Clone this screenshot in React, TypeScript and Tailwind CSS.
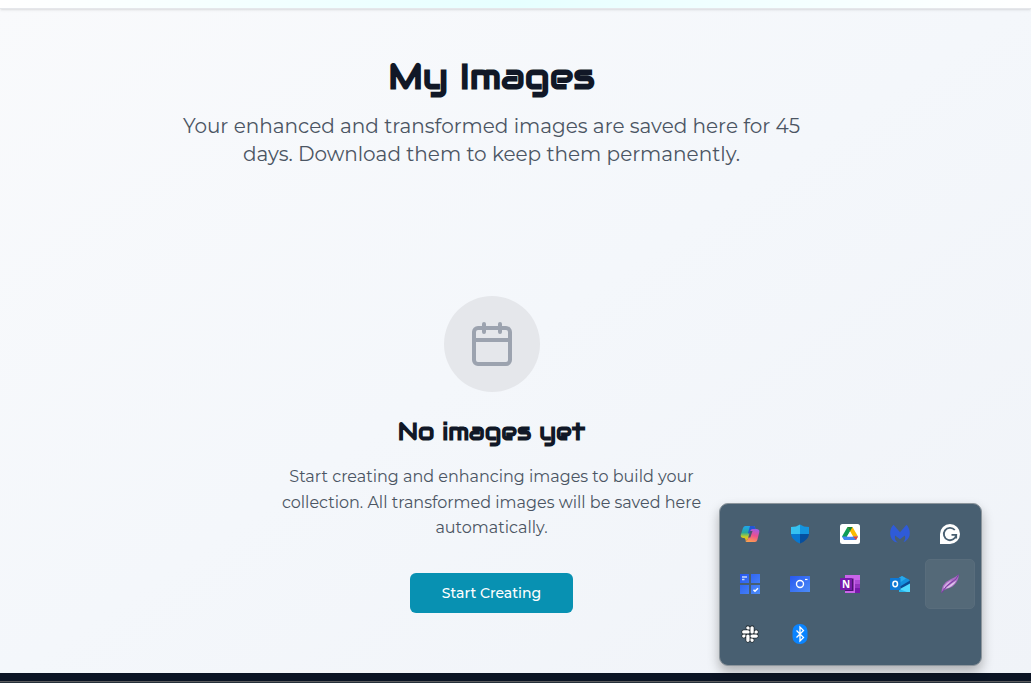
import React from "react";
import { FaSlack } from "react-icons/fa";

function Copilot() {
  return (
    <svg width="20" height="20" viewBox="0 0 20 20">
      <defs>
        <linearGradient id="cpA" x1="0" y1="0" x2="0" y2="1">
          <stop offset="0" stopColor="#1fa5ee" />
          <stop offset=".45" stopColor="#28a99b" />
          <stop offset=".75" stopColor="#c8cf24" />
          <stop offset="1" stopColor="#f3a51c" />
        </linearGradient>
        <linearGradient id="cpB" x1=".6" y1="0" x2=".3" y2="1">
          <stop offset="0" stopColor="#a45be0" />
          <stop offset=".45" stopColor="#ec4f90" />
          <stop offset="1" stopColor="#ffa04d" />
        </linearGradient>
      </defs>
      <path d="M5.500 2h8q1 0 1.500 1.200L15.500 5h-2.500q-1.500 0-2 1.500L8 15q-.5 1.500-2 1.500L4.500 14H3Q.2 13.500.8 10.800L3 4Q3.700 2 5.500 2Z" fill="url(#cpA)" />
      <path d="M10 2h3.500q1 0 1.500 1.200L15.500 5h-2.500q-1.500 0-2 1.500L9.500 10 8 9Z" fill="#2456d5" />
      <path d="M15 18H7q-1.300 0-1.700-1.500Q7.500 17 8 15L10.500 6.500q.5-1.500 2-1.500H17q2.700.5 2.300 3L17.300 16Q16.800 18 15 18Z" fill="url(#cpB)" />
      <path d="M10.200 7h2.300l-2.200 6.500H8.300Z" fill="#47566f" />
    </svg>
  );
}

function Shield() {
  return (
    <svg width="20" height="20" viewBox="0 0 20 20">
      <path d="M10 .5Q13.500 3 19 3v7H10Z" fill="#1494df" />
      <path d="M10 .5Q6.500 3 1 3v7h9Z" fill="#35c1f1" />
      <path d="M1 10h9v9.500Q1.500 16 1 10Z" fill="#0878d1" />
      <path d="M19 10h-9v9.500Q18.500 16 19 10Z" fill="#064f9f" />
    </svg>
  );
}

function Drive() {
  return (
    <svg width="20" height="20" viewBox="0 0 20 20">
      <rect width="20" height="20" rx="2.500" fill="#fff" />
      <path d="M7.500 3H10l1.300 2.200L5 16 2 12.500Z" fill="#0f9d58" />
      <path d="M7.500 3h5L18 12.500h-5Z" fill="#fbbc04" />
      <path d="M7.500 3h5L10 7.300Z" fill="#188038" />
      <path d="M2 12.500h16L16 16H4Z" fill="#4285f4" />
      <path d="M13 12.500h5L16 16Z" fill="#ea4335" />
      <path d="M10 7.500l2.900 5H7.100Z" fill="#fff" />
    </svg>
  );
}

function Malwarebytes() {
  return (
    <svg width="20" height="20" viewBox="0 0 20 20">
      <path d="M3.500.8L10 8.200 16.500.8C20.800 5.500 21 13 16.200 16.500Q15.500 17.800 13.500 18q2.500-3 1.300-6.500L10 15.300 5.200 11.500q-1 3.500 1.300 6L8 18.500Q4.500 18.500 2.500 16C-.8 11.500-.7 5 3.500.8Z" fill="#2f5bd8" />
    </svg>
  );
}

function Grammarly() {
  return (
    <svg width="20" height="20" viewBox="0 0 20 20">
      <path d="M0 20V10a10 10 0 1 1 10 10Z" fill="#fff" />
      <path d="M14.800 6A6.200 6.200 0 1 0 16.200 10.800H11.500M16.200 10.800V14.500" fill="none" stroke="#485f71" strokeWidth="1.800" />
    </svg>
  );
}

function Tiles() {
  return (
    <svg width="20" height="20" viewBox="0 0 20 20">
      <defs>
        <linearGradient id="tile" x1="0" y1="0" x2="1" y2="1">
          <stop stopColor="#2858ef" />
          <stop offset="1" stopColor="#4c8cf8" />
        </linearGradient>
      </defs>
      <path d="M0 0h9v9H0ZM11 0h9v9h-9ZM0 11h9v9H0ZM11 11h9v9h-9Z" fill="url(#tile)" />
      <path d="M2 3h5M2 5.500h2.500" stroke="#c9dbff" strokeWidth="1.300" />
      <path d="M13.500 15.700l1.500 1.500 3-3" fill="none" stroke="#fff" strokeWidth="1.500" />
    </svg>
  );
}

function Camera() {
  return (
    <svg width="20" height="20" viewBox="0 0 20 20">
      <rect y="2" width="20" height="16" rx=".5" fill="url(#tile)" />
      <circle cx="10" cy="10" r="3.500" fill="none" stroke="#fff" strokeWidth="1.400" />
      <path d="M15 5.500h2.500" stroke="#fff" strokeWidth="1.200" />
    </svg>
  );
}

function OneNote() {
  return (
    <span className="relative block size-5">
      <svg width="20" height="20" viewBox="0 0 20 20" className="block">
        <path d="M5 1h15v18H5Z" fill="#ca64ea" />
        <path d="M15 6h5v4h-5Z" fill="#ae4bd5" />
        <path d="M15 10h5v4h-5Z" fill="#9332bf" />
        <path d="M15 14h5v5h-5Z" fill="#7719aa" />
        <path d="M5 4.500h8.500v12.500H5Z" fill="#4c126f" />
        <rect y="4" width="12" height="12" rx=".6" fill="#7719aa" />
      </svg>
      <b className="absolute left-0 top-1 w-3 text-center font-['Open_Sans',sans-serif] text-[10px] leading-3 text-white">N</b>
    </span>
  );
}

function Outlook() {
  return (
    <svg width="20" height="20" viewBox="0 0 20 20">
      <path d="M6 5.500L12 2l7 3.500 1 1.500V12H6Z" fill="#1490df" />
      <path d="M8 4.500L12 2l4 2.500-6 4Z" fill="#28a8ea" />
      <path d="M10 12.500L20 6.500v4L12 15Z" fill="#0a4a96" />
      <path d="M9 18h11V9.500L9 15.500Z" fill="#50d9ff" />
      <path d="M9 15l8 3H9Z" fill="#28b6ed" />
      <rect y="4" width="10.500" height="12" rx=".6" fill="#0f78d4" />
      <ellipse cx="5.200" cy="10" rx="2.300" ry="2.700" fill="none" stroke="#fff" strokeWidth="1.500" />
    </svg>
  );
}

function Feather() {
  return (
    <svg width="20" height="20" viewBox="0 0 20 20">
      <path d="M1.500 18.500Q1.800 14 3 11.500 6 7 11 5 16 3 18.500.5q.6 4-2.500 8.500-3.500 4.500-8 5.500-4 1-6.500 4Z" fill="#a86cc4" />
      <path d="M3.500 13Q6.500 8 12 6q-4 4-8 9Z" fill="#d3afe2" />
      <path d="M5.500 14.500q7-1 11-8Q12 9 5.500 14.500Z" fill="#dfc5ea" />
      <path d="M1.500 19Q6 11 12 8 17 5.500 18.500.5" fill="none" stroke="#7b3aa3" strokeWidth="1" />
    </svg>
  );
}

function Slack() {
  return <FaSlack size={18} className="overflow-visible fill-white stroke-[#222b31] stroke-[44px] [paint-order:stroke]" />;
}

function Bluetooth() {
  return (
    <svg width="20" height="20" viewBox="0 0 20 20">
      <rect x="2.500" width="15" height="20" rx="7" fill="#0a84ff" />
      <path d="M6.500 6.500l7 7L10 17V3l3.500 3.500-7 7" fill="none" stroke="#fff" strokeWidth="1.300" />
    </svg>
  );
}

const tray = [Copilot, Shield, Drive, Malwarebytes, Grammarly, Tiles, Camera, OneNote, Outlook, Feather, Slack, Bluetooth];

export default function App() {
  return (
    <div className="relative flex h-[683px] w-[1031px] flex-col overflow-hidden bg-gradient-to-br from-[#f9fafc] via-[#f4f7fb] to-[#f0f3f8] font-['Montserrat',sans-serif]">
      <header className="h-[9px] shrink-0 border-b border-gray-200 bg-gradient-to-r from-white via-[#e6ffff] to-white shadow-sm" />
      <main className="flex w-[983px] grow flex-col items-center text-center">
        <h1 className="mt-[47px] whitespace-nowrap font-['Audiowide',sans-serif] text-[36px] font-bold leading-10 text-[#111827]">My Images</h1>
        <div className="mt-4 whitespace-nowrap text-[20px] leading-7 text-[#4b5563]">
          <p>Your enhanced and transformed images are saved here for 45</p>
          <p>days. Download them to keep them permanently.</p>
        </div>
        <div className="mt-32 flex size-24 items-center justify-center rounded-full bg-gray-200">
          <svg width="48" height="48" viewBox="0 0 24 24" fill="none" stroke="#9ca3af" strokeWidth="2" strokeLinecap="round" strokeLinejoin="round">
            <path d="M8 2v4M16 2v4M3 10h18" />
            <rect x="3" y="4" width="18" height="18" rx="2" />
          </svg>
        </div>
        <h2 className="mt-6 whitespace-nowrap font-['Audiowide',sans-serif] text-[24px] font-bold leading-8 text-[#111827]">No images yet</h2>
        <div className="mt-4 whitespace-nowrap text-[16px] leading-[25.600px] text-[#4b5563]">
          <p>Start creating and enhancing images to build your</p>
          <p>collection. All transformed images will be saved here</p>
          <p>automatically.</p>
        </div>
        <button className="mt-8 h-10 w-[163px] rounded-md bg-[#0891b2] pt-px text-[14px] font-medium text-white">Start Creating</button>
      </main>
      <footer className="flex h-[10px] shrink-0 flex-col justify-end bg-[#0b1424]">
        <div className="h-px bg-[#5c5c5e]" />
        <div className="h-px bg-[#26303a]" />
      </footer>
      <div className="absolute left-[719px] top-[503px] grid h-[163px] w-[263px] grid-cols-[repeat(5,50px)] grid-rows-[repeat(3,50px)] rounded-[9px] border border-[#8c959c] bg-[#485f71] p-[5px] shadow-[0_6px_12px_rgba(0,0,0,0.28)]">
        {tray.map((Icon, i) => (
          <div key={i} className={i === 9 ? "flex items-center justify-center rounded-[5px] border border-[#596d7c] bg-[#546978]" : "flex items-center justify-center"}>
            <Icon />
          </div>
        ))}
      </div>
    </div>
  );
}
